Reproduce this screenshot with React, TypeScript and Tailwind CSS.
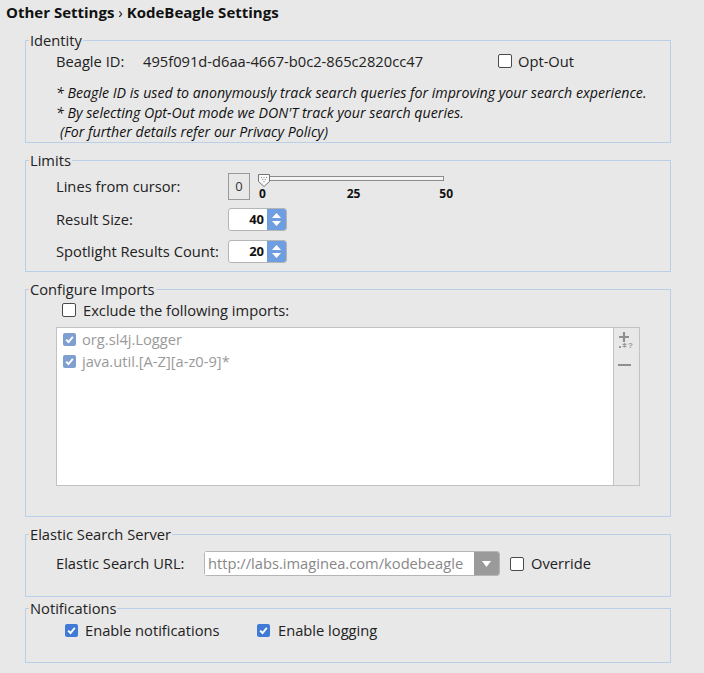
const font = { fontFamily: '"Open Sans", "Noto Sans", sans-serif' };

const Check = ({ checked, dim }: { checked?: boolean; dim?: boolean }) =>
  checked ? (
    <span
      className={`flex h-[13px] w-[13px] shrink-0 items-center justify-center rounded-[2px] ${
        dim ? "bg-[#7f9fd0]" : "bg-[#3f7ad6]"
      }`}
    >
      <svg width="11" height="11" viewBox="0 0 11 11">
        <path d="M2.2 5.6 L4.5 8 L8.8 2.8" fill="none" stroke="white" strokeWidth="1.9" />
      </svg>
    </span>
  ) : (
    <span className="block h-[14px] w-[14px] shrink-0 rounded-[2px] border border-[#4a4a4a] bg-white" />
  );

const Group = ({
  title,
  className,
  children,
}: {
  title: string;
  className?: string;
  children: React.ReactNode;
}) => (
  <fieldset className={`border border-[#b9d0e8] ${className ?? ""}`}>
    <legend className="ml-[3px] px-[1px] text-[14.7px] leading-[20px] text-[#222]">{title}</legend>
    {children}
  </fieldset>
);

const Spinner = ({ value }: { value: number }) => (
  <div className="flex h-[23px] w-[59px] items-stretch rounded-[3px] border border-[#b5b5b5] bg-white">
    <span className="flex-1 pr-[3px] text-right text-[13px] font-bold leading-[21px] text-[#111]">
      {value}
    </span>
    <span className="flex w-[19px] flex-col items-center justify-center gap-[3px] rounded-r-[2px] bg-[#6f9ee0]">
      <svg width="9" height="5" viewBox="0 0 9 5">
        <path d="M0 5 L4.5 0 L9 5 Z" fill="white" />
      </svg>
      <svg width="9" height="5" viewBox="0 0 9 5">
        <path d="M0 0 L4.5 5 L9 0 Z" fill="white" />
      </svg>
    </span>
  </div>
);

export default function App() {
  return (
    <div className="min-h-screen bg-[#e8e8e8] pl-[6px] pt-[2px] text-[#222]" style={font}>
      <div className="h-5 text-[15px] font-bold leading-5 text-[#111]">
        Other Settings <span className="font-normal">›</span> KodeBeagle Settings
      </div>

      <div className="ml-[19px] mt-[8px] flex w-[646px] flex-col">
        <Group title="Identity" className="pb-0">
          <div className="flex h-[22px] items-center pl-[30px] text-[14.7px]">
            <span className="w-[87px]">Beagle ID:</span>
            <span className="w-[355px]">495f091d-d6aa-4667-b0c2-865c2820cc47</span>
            <Check />
            <span className="ml-[6px]">Opt-Out</span>
          </div>
          <div className="mt-[11px] pl-[30px] text-[14.2px] italic leading-[20px] text-[#111]">
            <div>* Beagle ID is used to anonymously track search queries for improving your search experience.</div>
            <div>* By selecting Opt-Out mode we DON'T track your search queries.</div>
            <div className="-mt-[1px] pl-[4px]">(For further details refer our Privacy Policy)</div>
          </div>
        </Group>

        <Group title="Limits" className="mt-[7px] pb-[8px]">
          <div className="mt-[3px] flex h-[27px] items-center pl-[30px] text-[14.7px]">
            <span className="w-[172px]">Lines from cursor:</span>
            <span className="flex h-[27px] w-[22px] items-center justify-center border border-[#999] text-[13px] text-[#333]">
              0
            </span>
            <div className="ml-[7px] flex h-[27px] w-[205px] flex-col">
              <div className="relative h-[14px]">
                <div className="absolute left-[4px] top-[3px] h-[5px] w-[183px] border border-[#8c8c8c] bg-[#f4f4f4]" />
                <svg className="absolute left-0 top-0" width="14" height="15" viewBox="0 0 14 15">
                  <path d="M1.5 1.5 H12.5 V8.5 L7 13.5 L1.5 8.5 Z" fill="#fafafa" stroke="#777" />
                  <circle cx="4.5" cy="4.5" r="0.6" fill="#777" />
                  <circle cx="7" cy="4.5" r="0.6" fill="#777" />
                  <circle cx="9.5" cy="4.5" r="0.6" fill="#777" />
                  <circle cx="5.8" cy="6.5" r="0.6" fill="#777" />
                  <circle cx="8.3" cy="6.5" r="0.6" fill="#777" />
                  <circle cx="7" cy="8.5" r="0.6" fill="#777" />
                </svg>
              </div>
              <div className="flex w-[196px] justify-between pl-[2px] text-[12px] font-bold leading-[13px] text-[#111]">
                <span>0</span>
                <span className="pl-[2px]">25</span>
                <span>50</span>
              </div>
            </div>
          </div>
          <div className="mt-[8px] flex h-[23px] items-center pl-[30px] text-[14.7px]">
            <span className="w-[172px]">Result Size:</span>
            <Spinner value={40} />
          </div>
          <div className="mt-[9px] flex h-[23px] items-center pl-[30px] text-[14.7px]">
            <span className="w-[172px]">Spotlight Results Count:</span>
            <Spinner value={20} />
          </div>
        </Group>

        <Group title="Configure Imports" className="mt-[7px] pb-[30px]">
          <div className="mt-[1px] flex h-5 items-center pl-[36px] text-[14.7px]">
            <Check />
            <span className="ml-[7px]">Exclude the following imports:</span>
          </div>
          <div className="ml-[30px] mt-[7px] flex h-[159px] w-[584px] border border-[#c2c2c2]">
            <div className="flex-1 bg-white pl-[6px] text-[14.7px] text-[#9a9a9a]">
              {["org.sl4j.Logger", "java.util.[A-Z][a-z0-9]*"].map((item, idx) => (
                <div key={idx} className="flex h-[22px] items-center">
                  <Check checked dim />
                  <span className="ml-[6px]">{item}</span>
                </div>
              ))}
            </div>
            <div className="flex w-[26px] flex-col items-start border-l border-[#c2c2c2] bg-[#e8e8e8] pl-[4px] pt-[4px]">
              <svg width="18" height="18" viewBox="0 0 18 18">
                <path d="M6 0 V10 M1 5 H11" stroke="#8f8f8f" strokeWidth="2.2" />
                <rect x="1" y="14" width="2" height="2" fill="#999" />
                <path d="M6.5 11 V15.5 M4.6 12 L8.4 14.5 M8.4 12 L4.6 14.5" stroke="#999" strokeWidth="1.2" />
                <text x="10" y="16" fontSize="8" fontWeight="bold" fill="#999" fontFamily="Liberation Sans, sans-serif">
                  ?
                </text>
              </svg>
              <svg className="mt-[13px]" width="14" height="4" viewBox="0 0 14 4">
                <rect x="0" y="1" width="13" height="2" fill="#8f8f8f" />
              </svg>
            </div>
          </div>
        </Group>

        <Group title="Elastic Search Server" className="mt-[7px] pb-[20px]">
          <div className="mt-[7px] flex h-[25px] items-center pl-[30px] text-[14.7px]">
            <span className="w-[148px]">Elastic Search URL:</span>
            <div className="flex h-[25px] w-[296px] rounded-[3px] border border-[#b5b5b5]">
              <span className="flex-1 truncate bg-white pl-[3px] text-[14.7px] leading-[23px] text-[#888]">
                http://labs.imaginea.com/kodebeagle
              </span>
              <span className="flex w-[25px] items-center justify-center rounded-r-[2px] bg-[#9a9a9a]">
                <svg width="9" height="6" viewBox="0 0 9 6">
                  <path d="M0 0 L4.5 6 L9 0 Z" fill="white" />
                </svg>
              </span>
            </div>
            <div className="ml-[10px] flex">
              <Check />
            </div>
            <span className="ml-[7px]">Override</span>
          </div>
        </Group>

        <Group title="Notifications" className="mt-[1px] pb-[22px]">
          <div className="mt-[2px] flex h-5 items-center pl-[39px] text-[14.7px]">
            <Check checked />
            <span className="ml-[7px] w-[172px]">Enable notifications</span>
            <Check checked />
            <span className="ml-[8px]">Enable logging</span>
          </div>
        </Group>
      </div>
    </div>
  );
}
